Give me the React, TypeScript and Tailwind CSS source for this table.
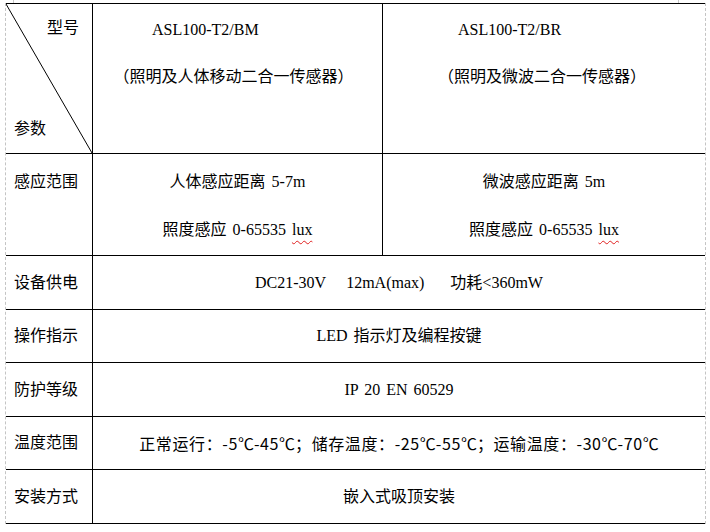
import React from "react";

const Label = ({ children }: { children: React.ReactNode }) => (
  <div className="flex items-center border-r border-black pl-[8px]">{children}</div>
);

const SimpleRow = ({ label, h, children }: { label: string; h: string; children: React.ReactNode }) => (
  <div className={`grid grid-cols-[87px_1fr] border-b border-black ${h}`}>
    <Label>{label}</Label>
    <div className="flex items-center justify-center whitespace-pre">{children}</div>
  </div>
);

const C = () => <span className="inline-block w-[16px] text-center">℃</span>;

export default function App() {
  return (
    <div className="w-[710px] h-[532px] overflow-hidden bg-white text-black text-[16px] leading-[24px] [word-spacing:2px] [font-family:'Liberation_Serif','Noto_Sans_CJK_SC',serif]">
      <div className="flex h-[3px]">
        <div className="ml-[13px] w-px bg-[#c8c8c8]" />
        <div className="ml-auto mr-[31px] w-px bg-[#c8c8c8]" />
      </div>
      <div className="ml-[5px] w-[701px] border-x border-dashed border-[#c4c4c4]">
        <div className="border-t border-black">
          {/* header row */}
          <div className="grid grid-cols-[87px_290px_1fr] h-[150px] border-b border-black">
            <div className="relative flex flex-col justify-between border-r border-black pt-[12px] pb-[12px]">
              <svg className="absolute inset-0 h-full w-full" preserveAspectRatio="none" viewBox="0 0 86 149">
                <line x1="0" y1="0" x2="86" y2="149" stroke="#000" strokeWidth="1" vectorEffect="non-scaling-stroke" />
              </svg>
              <span className="pl-[41px]">型号</span>
              <span className="pl-[8px]">参数</span>
            </div>
            <div className="flex flex-col border-r border-black pt-[14px]">
              <span className="pl-[59px]">ASL100-T2/BM</span>
              <span className="mt-[23px] pr-[8px] text-center">（照明及人体移动二合一传感器）</span>
            </div>
            <div className="flex flex-col pt-[14px]">
              <span className="pl-[75px]">ASL100-T2/BR</span>
              <span className="mt-[23px] pr-[4px] text-center">（照明及微波二合一传感器）</span>
            </div>
          </div>

          {/* sensing range */}
          <div className="grid grid-cols-[87px_290px_1fr] h-[102px] border-b border-black">
            <div className="border-r border-black pl-[8px] pt-[16px]">感应范围</div>
            <div className="flex flex-col items-center border-r border-black pt-[16px]">
              <span>人体感应距离 5-7m</span>
              <span className="mt-[24px]">
                照度感应 0-65535{" "}
                <span className="underline decoration-wavy decoration-[#e02020] decoration-1 underline-offset-[5px]">lux</span>
              </span>
            </div>
            <div className="flex flex-col items-center pt-[16px]">
              <span>微波感应距离 5m</span>
              <span className="mt-[24px]">
                照度感应 0-65535{" "}
                <span className="underline decoration-wavy decoration-[#e02020] decoration-1 underline-offset-[5px]">lux</span>
              </span>
            </div>
          </div>

          <SimpleRow label="设备供电" h="h-[54px]">
            <span>DC21-30V</span>
            <span className="ml-[20px]">12mA(max)</span>
            <span className="ml-[26px]">功耗&lt;360mW</span>
          </SimpleRow>
          <SimpleRow label="操作指示" h="h-[53px]">
            <span>LED 指示灯及编程按键</span>
          </SimpleRow>
          <SimpleRow label="防护等级" h="h-[54px]">
            <span>IP 20 EN 60529</span>
          </SimpleRow>
          <SimpleRow label="温度范围" h="h-[53px]">
            <span className="tracking-[0.6px] [font-family:'Noto_Sans_CJK_SC',sans-serif]">
              正常运行：-5<C />-45<C />；储存温度：-25<C />-55<C />；运输温度：-30<C />-70<C />
            </span>
          </SimpleRow>
          <SimpleRow label="安装方式" h="h-[54px]">
            <span>嵌入式吸顶安装</span>
          </SimpleRow>
        </div>
      </div>
    </div>
  );
}
